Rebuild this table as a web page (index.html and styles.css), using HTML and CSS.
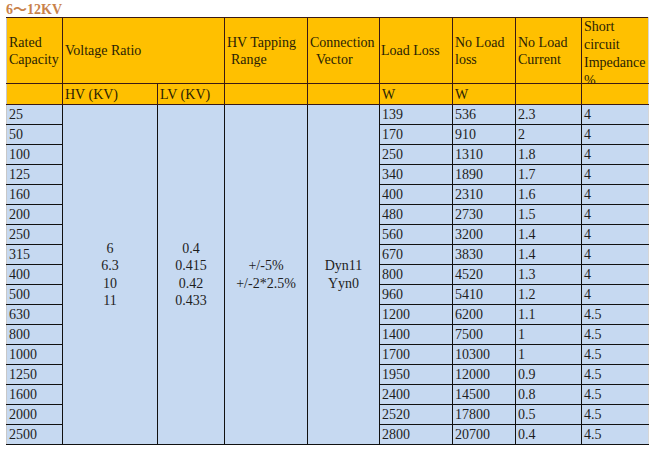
FILE: index.html
```html
<!DOCTYPE html>
<html>
<head>
<meta charset="utf-8">
<link rel="stylesheet" href="styles.css">
</head>
<body>
<div class="title">6～12KV</div>
<table class="spec">
  <colgroup>
    <col class="c1"><col class="c2"><col class="c3"><col class="c4"><col class="c5"><col class="c6"><col class="c7"><col class="c8"><col class="c9">
  </colgroup>
  <thead>
    <tr class="h1">
      <th>Rated Capacity</th>
      <th colspan="2">Voltage Ratio</th>
      <th>HV Tapping<br><span class="ind">Range</span></th>
      <th>Connection<br><span class="ind2">Vector</span></th>
      <th>Load Loss</th>
      <th>No Load loss</th>
      <th>No Load Current</th>
      <th class="clip"><div class="clipbox">Short circuit Impedance %</div></th>
    </tr>
    <tr class="h2">
      <th></th>
      <th>HV (KV)</th>
      <th>LV (KV)</th>
      <th></th>
      <th></th>
      <th>W</th>
      <th>W</th>
      <th></th>
      <th></th>
    </tr>
  </thead>
  <tbody>
    <tr><td>25</td><td rowspan="17" class="mid">6<br>6.3<br>10<br>11</td><td rowspan="17" class="mid">0.4<br>0.415<br>0.42<br>0.433</td><td rowspan="17" class="mid">+/-5%<br>+/-2*2.5%</td><td rowspan="17" class="mid">Dyn11<br>Yyn0</td><td>139</td><td>536</td><td>2.3</td><td>4</td></tr>
    <tr><td>50</td><td>170</td><td>910</td><td>2</td><td>4</td></tr>
    <tr><td>100</td><td>250</td><td>1310</td><td>1.8</td><td>4</td></tr>
    <tr><td>125</td><td>340</td><td>1890</td><td>1.7</td><td>4</td></tr>
    <tr><td>160</td><td>400</td><td>2310</td><td>1.6</td><td>4</td></tr>
    <tr><td>200</td><td>480</td><td>2730</td><td>1.5</td><td>4</td></tr>
    <tr><td>250</td><td>560</td><td>3200</td><td>1.4</td><td>4</td></tr>
    <tr><td>315</td><td>670</td><td>3830</td><td>1.4</td><td>4</td></tr>
    <tr><td>400</td><td>800</td><td>4520</td><td>1.3</td><td>4</td></tr>
    <tr><td>500</td><td>960</td><td>5410</td><td>1.2</td><td>4</td></tr>
    <tr><td>630</td><td>1200</td><td>6200</td><td>1.1</td><td>4.5</td></tr>
    <tr><td>800</td><td>1400</td><td>7500</td><td>1</td><td>4.5</td></tr>
    <tr><td>1000</td><td>1700</td><td>10300</td><td>1</td><td>4.5</td></tr>
    <tr><td>1250</td><td>1950</td><td>12000</td><td>0.9</td><td>4.5</td></tr>
    <tr><td>1600</td><td>2400</td><td>14500</td><td>0.8</td><td>4.5</td></tr>
    <tr><td>2000</td><td>2520</td><td>17800</td><td>0.5</td><td>4.5</td></tr>
    <tr><td>2500</td><td>2800</td><td>20700</td><td>0.4</td><td>4.5</td></tr>
  </tbody>
</table>
</body>
</html>
```
FILE: styles.css
```css
html, body {
  margin: 0;
  padding: 0;
  background: #ffffff;
}
body {
  padding: 2px 0 0 6px;
  font-family: "Liberation Serif", "Noto Sans CJK SC", serif;
}
.title {
  font-weight: bold;
  font-size: 14px;
  line-height: 15px;
  color: #c9824a;
  height: 15px;
}
.spec {
  border-collapse: collapse;
  table-layout: fixed;
  width: 642px;
  font-family: "Liberation Serif", serif;
  font-size: 14px;
  color: #1e1e1e;
}
.spec th, .spec td {
  font-family: "Liberation Serif", serif;
}
.c1 { width: 56px; }
.c2 { width: 95px; }
.c3 { width: 67px; }
.c4 { width: 83px; }
.c5 { width: 72px; }
.c6 { width: 73px; }
.c7 { width: 63px; }
.c8 { width: 66px; }
.c9 { width: 67px; }
.spec th {
  background: #ffc000;
  font-weight: normal;
  text-align: left;
  border: 1px solid #3a1a14;
  padding: 0 2px;
  line-height: 17px;
  color: #2a1e05;
  vertical-align: middle;
}
.spec tr.h1 th { height: 65px; }
.spec tr.h2 th { height: 20px; vertical-align: bottom; line-height: 18px; }
.spec th:first-child, .spec td:first-child { border-left-color: #c8c8c8; }
.spec th:last-child, .spec td:last-child { border-right-color: #d6d6d6; }
.spec tr.h1 th:nth-child(5) { padding-left: 1px; }
.ind { padding-left: 4px; }
.ind2 { padding-left: 6px; }
.spec th.clip { vertical-align: top; padding-top: 0; }
.clipbox {
  height: 65px;
  overflow: hidden;
  line-height: 18px;
}
.spec td {
  background: #c6d9f1;
  border: 1px solid #111111;
  padding: 0 2px;
  height: 19px;
  line-height: 18px;
  vertical-align: bottom;
}
.spec td.mid {
  text-align: center;
  vertical-align: middle;
  line-height: 17.5px;
}
```
